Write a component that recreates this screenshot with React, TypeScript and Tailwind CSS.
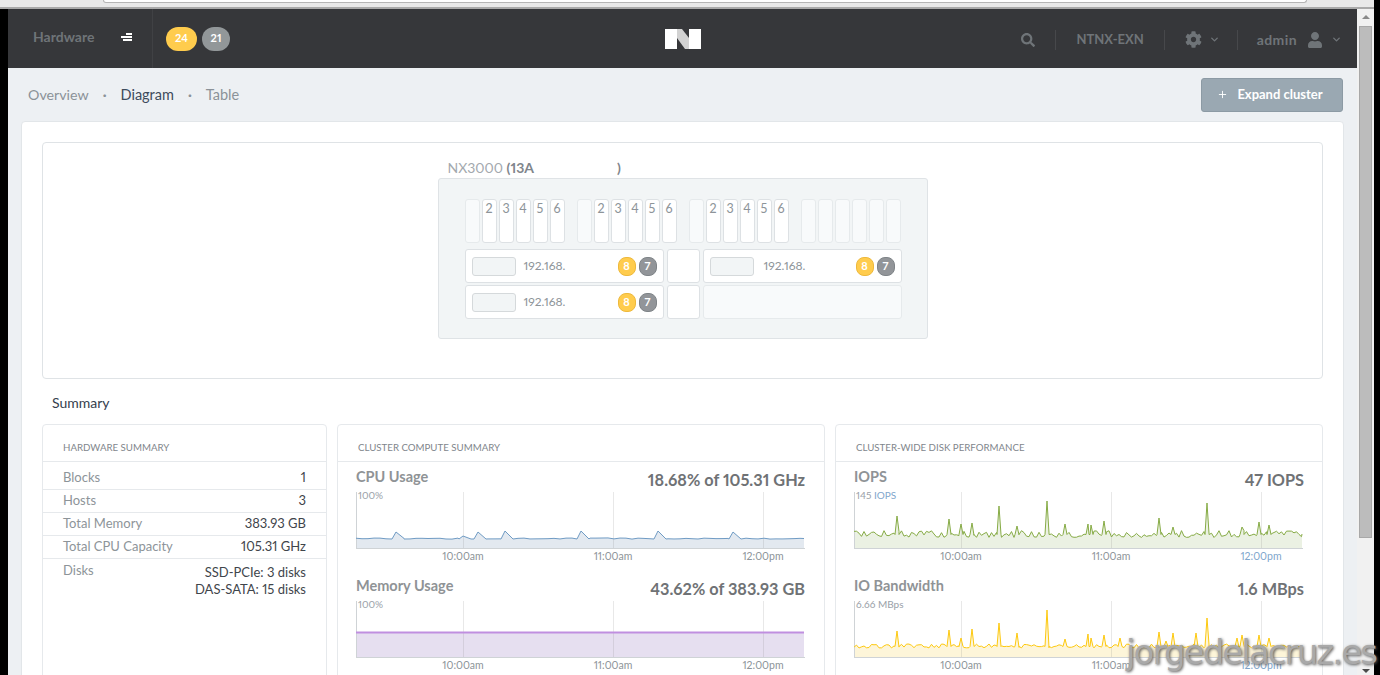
import { FaCog, FaSearch, FaUser } from 'react-icons/fa'
import { ChevronDown, Plus } from 'lucide-react'

// deterministic noise so the charts don't change between renders
function noise(i: number, seed: number) {
  const v = Math.sin(i * 12.9898 + seed * 78.233) * 43758.5453
  return v - Math.floor(v)
}

type Peak = [number, number]

const W = 448

function series(base: number, amp: number, seed: number, peaks: Peak[], step: number, rise: number, fall: number) {
  const pts: [number, number][] = []
  for (let x = 0; x < W; x += step) {
    pts.push([x, base + (noise(x, seed) - 0.5) * amp])
  }
  pts.push([W, base])
  // drop noise points that land inside a peak
  const kept = pts.filter(([x]) => !peaks.some(([px]) => x > px - rise && x < px + fall))
  for (const [px, top] of peaks) {
    kept.push([px - rise, base + 0.5], [px, top], [px + fall, base + 0.5])
  }
  return kept.sort((a, b) => a[0] - b[0])
}

function Chart({
  data,
  color,
  fill,
  label,
  unit,
  blueTime,
  lineWidth = 1,
}: {
  data: [number, number][]
  color: string
  fill: string
  label: string
  unit?: string
  blueTime?: boolean
  lineWidth?: number
}) {
  const line = data.map(([x, y]) => `${x},${y}`).join(' ')
  return (
    <svg width="449" height="78" className="block overflow-visible">
      <polygon points={`0,56 ${line} ${W},56`} fill={fill} />
      {[107, 257, 407].map((x) => (
        <line key={x} x1={x + 0.5} x2={x + 0.5} y1="0" y2="56" stroke="#8c8c8c" strokeOpacity="0.2" />
      ))}
      <line x1="0.5" x2="0.5" y1="0" y2="56" stroke="#cfd3d6" />
      <line x1="0" x2="449" y1="56.5" y2="56.5" stroke="#cfd3d6" />
      <polyline points={line} fill="none" stroke={color} strokeWidth={lineWidth} />
      <text x="2" y="7" fontSize="10" fill="#9aa1a8">
        {label}
        {unit && <tspan fill="#7fa6cc"> {unit}</tspan>}
      </text>
      {['10:00am', '11:00am', '12:00pm'].map((t, i) => (
        <text
          key={t}
          x={107 + i * 150}
          y="68"
          fontSize="10.5"
          textAnchor="middle"
          fill={blueTime && i === 2 ? '#7fa6cc' : '#8d9499'}
        >
          {t}
        </text>
      ))}
    </svg>
  )
}

function Metric({ title, value, children }: { title: string; value: string; children: React.ReactNode }) {
  return (
    <div>
      <div className="flex h-6 justify-between">
        <span className="text-[14.5px] leading-[18px] font-bold text-[#8f9396]">{title}</span>
        <span className="pt-0.5 text-[16.3px] leading-[20px] font-bold text-[#6f7275]">{value}</span>
      </div>
      {children}
    </div>
  )
}

function Slots({ numbers }: { numbers: boolean }) {
  return (
    <div className="flex gap-[2px]">
      {[1, 2, 3, 4, 5, 6].map((n) =>
        numbers && n > 1 ? (
          <div
            key={n}
            className="h-[44px] w-[15px] rounded-[3px] border border-[#dde1e4] bg-white text-center text-[12.5px] leading-[17px] text-[#8d9499]"
          >
            {n}
          </div>
        ) : (
          <div key={n} className="h-[44px] w-[15px] rounded-[3px] border border-[#e6eaec] bg-[#f8fafb]" />
        ),
      )}
    </div>
  )
}

function Node({ wide }: { wide?: boolean }) {
  return (
    <div className="flex h-[34px] items-center rounded-[3px] border border-[#dde1e4] bg-white pr-[6px] pl-[6px]">
      <div className="h-[19px] w-[44px] rounded-[3px] border border-[#d5d9db] bg-[#f2f5f6]" />
      <span className={`text-[12px] text-[#8d9499] ${wide ? 'ml-[10px]' : 'ml-[8px]'}`}>192.168.</span>
      <span className="ml-auto flex h-[19px] w-[18px] items-center justify-center rounded-[8px] border border-[#eeb93c] bg-[#ffcc4d] text-[11px] font-bold text-white">
        8
      </span>
      <span className="ml-[3px] flex h-[19px] w-[18px] items-center justify-center rounded-[8px] border border-[#7f8488] bg-[#929599] text-[11px] font-bold text-white">
        7
      </span>
    </div>
  )
}

const cpu = series(46.5, 1.2, 3, [[40, 40], [107, 44], [122, 40], [149, 39], [225, 39], [302, 39], [377, 40]], 6, 4, 8)
const iops = series(42, 7, 7, [[43, 24], [95, 27], [107, 32], [118, 31], [145, 14], [163, 34], [193, 9], [211, 32], [234, 32], [237, 33], [250, 29], [305, 26], [319, 35], [353, 11], [405, 30], [388, 35], [415, 33]], 2.5, 2, 2)
const bandwidth = series(45, 4, 11, [[43, 30], [95, 29], [107, 37], [118, 28], [145, 22], [163, 32], [193, 9], [211, 38], [234, 33], [237, 37], [250, 34], [266, 37], [305, 31], [312, 40], [319, 32], [342, 32], [353, 17], [383, 37], [388, 34], [405, 34], [415, 37]], 2.5, 2, 2)
const memory: [number, number][] = [[0, 31.5], [W, 31.5]]

const hardwareRows = [
  ['Blocks', '1'],
  ['Hosts', '3'],
  ['Total Memory', '383.93 GB'],
  ['Total CPU Capacity', '105.31 GHz'],
]

export default function App() {
  return (
    <div className="relative h-[675px] w-[1380px] overflow-hidden bg-black proportional-nums [font-family:Lato,'Open_Sans',sans-serif]">
      {/* browser chrome strip */}
      <div className="h-[9px] w-[1374px] border-b-2 border-[#a9a9a9] bg-[#e9e9e9]">
        <div className="ml-[103px] h-[3px] w-[1204px] rounded-b-[3px] border-x border-b border-[#b5b5b5] bg-white" />
      </div>

      <div className="flex h-[666px]">
        <div className="w-[8px] shrink-0 bg-black" />

        <div className="w-[1349px] shrink-0 overflow-hidden bg-[#edf0f3]">
          {/* top bar */}
          <header className="grid h-[59px] grid-cols-[1fr_36px_1fr] items-center bg-[#36373a]">
            <div className="flex h-full items-center">
              <div className="flex h-full w-[145px] items-center justify-between border-r border-[#404144] pr-[20px] pb-[5px] pl-[25px]">
                <span className="text-[14px] font-bold text-[#6f7478]">Hardware</span>
                <span className="flex flex-col items-end gap-[1px] pt-[2px]">
                  <span className="h-[2px] w-[6px] bg-white" />
                  <span className="h-[2px] w-[11px] bg-white" />
                  <span className="h-[2px] w-[9px] bg-white" />
                </span>
              </div>
              <span className="ml-[13px] flex h-[24px] w-[31px] items-center justify-center rounded-full bg-[#ffcc4d] text-[11px] font-bold text-white">
                24
              </span>
              <span className="ml-[5px] flex h-[24px] w-[28px] items-center justify-center rounded-full bg-[#929799] text-[11px] font-bold text-white">
                21
              </span>
            </div>

            <svg width="36" height="20" viewBox="0 0 36 20">
              <rect x="0" y="0" width="12" height="20" fill="#ffffff" />
              <rect x="24" y="0" width="12" height="20" fill="#ffffff" />
              <polygon points="12,0 17,0 24,9 24,20 20,20 12,9" fill="#d2d2d2" />
            </svg>

            <div className="flex items-center justify-end pt-[2px] pr-[15px] text-[#6f7478]">
              <FaSearch size={14} />
              <span className="mx-[20px] h-[20px] w-px bg-[#47484b]" />
              <span className="pt-[1px] text-[13px] font-bold">NTNX-EXN</span>
              <span className="mx-[20px] h-[20px] w-px bg-[#47484b]" />
              <FaCog size={17} />
              <ChevronDown size={11} strokeWidth={3} className="ml-[7px]" />
              <span className="mr-[19px] ml-[17px] h-[20px] w-px bg-[#47484b]" />
              <span className="text-[14px] font-bold tracking-[0.4px]">admin</span>
              <FaUser size={16} className="ml-[10px]" />
              <ChevronDown size={11} strokeWidth={3} className="ml-[8px]" />
            </div>
          </header>

          {/* sub navigation */}
          <nav className="flex h-[53px] items-center pr-[14px] pl-[20px]">
            <span className="pt-[1px] text-[14.25px] text-[#8b9298]">Overview</span>
            <span className="mx-[14px] text-[14px] font-bold text-[#8b9298]">·</span>
            <span className="pt-[1px] text-[14.5px] text-[#3d4b5c]">Diagram</span>
            <span className="mx-[14px] text-[14px] font-bold text-[#8b9298]">·</span>
            <span className="pt-[1px] text-[14.5px] text-[#8b9298]">Table</span>
            <button className="ml-auto flex h-[34px] w-[142px] items-center justify-center rounded-[3px] border border-[#8c9aa4] bg-[#9aa8b2] pr-[4px] text-[13px] font-bold text-white">
              <Plus size={11} strokeWidth={2} className="mr-[9px]" />
              Expand cluster
            </button>
          </nav>

          <main className="ml-[13px] h-[700px] w-[1323px] rounded-[4px] border border-[#e2e6e9] bg-white p-5">
            {/* block diagram */}
            <section className="flex h-[237px] justify-center rounded-[4px] border border-[#dfe3e6] pt-[14px]">
              <div className="w-[490px]">
                <div className="h-[21px] pl-[10px] text-[14px] leading-[21px] text-[#a3a9ae]">
                  NX3000{' '}
                  <b className="font-bold text-[#7f868c]">
                    (13A<span className="inline-block w-[83px]" />)
                  </b>
                </div>
                <div className="h-[161px] rounded-[3px] border border-[#dfe3e6] bg-[#f2f5f6] pt-[20px] pl-[26px]">
                  <div className="flex gap-[12px]">
                    <Slots numbers />
                    <Slots numbers />
                    <Slots numbers />
                    <Slots numbers={false} />
                  </div>
                  <div className="mt-[6px] grid w-[437px] grid-cols-[199px_33px_199px] gap-x-[3px] gap-y-[2px]">
                    <Node />
                    <div className="rounded-[3px] border border-[#dde1e4] bg-white" />
                    <Node wide />
                    <Node />
                    <div className="rounded-[3px] border border-[#dde1e4] bg-white" />
                    <div className="rounded-[3px] border border-[#e6eaec] bg-[#f8fafb]" />
                  </div>
                </div>
              </div>
            </section>

            <h2 className="flex h-[45px] items-center pt-[2px] pl-[10px] text-[14px] text-[#34404d]">Summary</h2>

            <div className="grid grid-cols-[285px_488px_488px] gap-[10px]">
              {/* hardware summary */}
              <section className="h-[400px] rounded-[4px] border border-[#e6e9ec]">
                <h3 className="flex h-[37px] items-center border-b border-[#e6e9ec] pt-[9px] pl-[20px] text-[9.7px] text-[#7f868c]">
                  HARDWARE SUMMARY
                </h3>
                {hardwareRows.map(([name, value], i) => (
                  <div
                    key={name}
                    className={`flex items-center justify-between border-b border-[#e6e9ec] pr-[20px] pl-[20px] text-[13px] ${
                      i === 0 ? 'h-[28px] pt-[5px]' : 'h-[23px]'
                    }`}
                  >
                    <span className="text-[#8d9499]">{name}</span>
                    <span className="text-[#3f454b]">{value}</span>
                  </div>
                ))}
                <div className="flex justify-between pt-[3px] pr-[20px] pl-[20px] text-[13px] leading-[17px]">
                  <span className="text-[#8d9499]">Disks</span>
                  <span className="pt-[2px] text-right text-[#3f454b]">
                    SSD-PCIe: 3 disks
                    <br />
                    DAS-SATA: 15 disks
                  </span>
                </div>
              </section>

              {/* compute */}
              <section className="h-[400px] rounded-[4px] border border-[#e6e9ec]">
                <h3 className="flex h-[37px] items-center border-b border-[#e6e9ec] pt-[9px] pl-[20px] text-[9.7px] text-[#7f868c]">
                  CLUSTER COMPUTE SUMMARY
                </h3>
                <div className="flex flex-col gap-[7px] pt-[6px] pr-[19px] pl-[18px]">
                  <Metric title="CPU Usage" value="18.68% of 105.31 GHz">
                    <Chart data={cpu} color="#6f9bc4" fill="#e3e9f0" label="100%" />
                  </Metric>
                  <Metric title="Memory Usage" value="43.62% of 383.93 GB">
                    <Chart data={memory} color="#c08fe0" fill="#e6dff0" label="100%" lineWidth={2} />
                  </Metric>
                </div>
              </section>

              {/* disk performance */}
              <section className="h-[400px] rounded-[4px] border border-[#e6e9ec]">
                <h3 className="flex h-[37px] items-center border-b border-[#e6e9ec] pt-[9px] pl-[20px] text-[9.7px] text-[#7f868c]">
                  CLUSTER-WIDE DISK PERFORMANCE
                </h3>
                <div className="flex flex-col gap-[7px] pt-[6px] pr-[18px] pl-[18px]">
                  <Metric title="IOPS" value="47 IOPS">
                    <Chart data={iops} color="#86ab45" fill="#ebf1e3" label="145" unit="IOPS" blueTime />
                  </Metric>
                  <Metric title="IO Bandwidth" value="1.6 MBps">
                    <Chart data={bandwidth} color="#fdc90f" fill="#fdf5d9" label="6.66 MBps" blueTime />
                  </Metric>
                </div>
              </section>
            </div>
          </main>
        </div>

        {/* scrollbar */}
        <div className="flex h-[666px] w-[17px] shrink-0 flex-col items-center bg-[#f1f1f1]">
          <div className="h-[17px] pt-[6px]">
            <div className="h-0 w-0 border-x-[4px] border-b-[4px] border-x-transparent border-b-[#8a8a8a]" />
          </div>
          <div className="h-[512px] w-[13px] border border-[#a8a8a8] bg-[#bcbcbc]" />
          <div className="mt-auto h-[10px] pt-[4px]">
            <div className="h-0 w-0 border-x-[4px] border-t-[4px] border-x-transparent border-t-[#4a4a4a]" />
          </div>
        </div>

        <div className="w-[6px] shrink-0 bg-black" />
      </div>

      {/* watermark burned into the screenshot */}
      <span className="absolute top-[629px] left-[1126px] text-[34px] leading-[46px] tracking-[-1.9px] text-[#a9a9a9] [font-family:'DejaVu_Sans',sans-serif] [text-shadow:1px_1px_3px_#555]">
        jorgedelacruz.es
      </span>
    </div>
  )
}
